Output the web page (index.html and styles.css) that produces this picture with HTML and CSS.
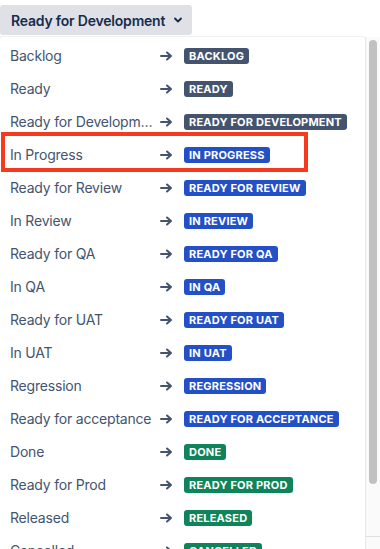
FILE: index.html
```html
<!DOCTYPE html>
<html lang="en">
  <head>
    <meta charset="UTF-8" />
    <meta name="viewport" content="width=device-width, initial-scale=1.0" />
    <title>Status transitions</title>
    <link rel="stylesheet" href="styles.css">
  </head>
  <body>
    <button class="status-button">
      Ready for Development
      <svg class="chevron" width="10" height="10" viewBox="0 0 10 10"><path d="M2 3.5 L5 6.5 L8 3.5" fill="none" stroke="#172b4d" stroke-width="1.8" stroke-linecap="round" stroke-linejoin="round"/></svg>
    </button>

    <div class="dropdown">
      <div class="menu">
        <div class="row"><span class="label">Backlog</span><span class="arrow"></span><span class="lozenge grey">Backlog</span></div>
        <div class="row"><span class="label">Ready</span><span class="arrow"></span><span class="lozenge grey">Ready</span></div>
        <div class="row"><span class="label">Ready for Development</span><span class="arrow"></span><span class="lozenge grey">Ready for Development</span></div>
        <div class="row highlighted"><span class="label">In Progress</span><span class="arrow"></span><span class="lozenge blue">In Progress</span></div>
        <div class="row"><span class="label">Ready for Review</span><span class="arrow"></span><span class="lozenge blue">Ready for Review</span></div>
        <div class="row"><span class="label">In Review</span><span class="arrow"></span><span class="lozenge blue">In Review</span></div>
        <div class="row"><span class="label">Ready for QA</span><span class="arrow"></span><span class="lozenge blue">Ready for QA</span></div>
        <div class="row"><span class="label">In QA</span><span class="arrow"></span><span class="lozenge blue">In QA</span></div>
        <div class="row"><span class="label">Ready for UAT</span><span class="arrow"></span><span class="lozenge blue">Ready for UAT</span></div>
        <div class="row"><span class="label">In UAT</span><span class="arrow"></span><span class="lozenge blue">In UAT</span></div>
        <div class="row"><span class="label">Regression</span><span class="arrow"></span><span class="lozenge blue">Regression</span></div>
        <div class="row"><span class="label">Ready for acceptance</span><span class="arrow"></span><span class="lozenge blue">Ready for acceptance</span></div>
        <div class="row"><span class="label">Done</span><span class="arrow"></span><span class="lozenge green">Done</span></div>
        <div class="row"><span class="label">Ready for Prod</span><span class="arrow"></span><span class="lozenge green">Ready for Prod</span></div>
        <div class="row"><span class="label">Released</span><span class="arrow"></span><span class="lozenge green">Released</span></div>
        <div class="row"><span class="label">Cancelled</span><span class="arrow"></span><span class="lozenge green">Cancelled</span></div>
      </div>
      <div class="scrollbar">
        <div class="thumb"></div>
        <div class="resizer"></div>
      </div>
    </div>
  </body>
</html>
```

FILE: styles.css
```css
body {
  width: 380px;
  height: 549px;
  margin: 0;
  overflow: hidden;
  font-family: Inter, "Liberation Sans", sans-serif;
  background: white;
}
.status-button {
  display: inline-flex;
  align-items: center;
  gap: 8px;
  height: 30px;
  margin-top: 5px;
  padding: 0 9px 0 11px;
  border: none;
  border-radius: 3px;
  background: #dfe1e6;
  color: #172b4d;
  font-family: inherit;
  font-size: 14px;
  font-weight: 600;
  letter-spacing: -0.2px;
}
.dropdown {
  display: flex;
  margin-top: 2px;
  height: 512px;
}
.menu {
  position: relative;
  width: 365px;
  padding-top: 2px;
  border-radius: 3px 3px 0 0;
  box-shadow: 0 0 0 1px #eef0f2, 0 1px 3px rgba(9, 30, 66, 0.08);
  overflow: hidden;
}
.row {
  position: relative;
  display: flex;
  align-items: center;
  height: 33px;
  padding-left: 10px;
  font-size: 14px;
  color: #44546f;
}
.label {
  width: 146px;
  letter-spacing: -0.2px;
  white-space: nowrap;
  overflow: hidden;
  text-overflow: ellipsis;
}
.arrow {
  width: 13px;
  height: 10px;
  margin: 0 11px 0 4px;
  background: no-repeat center / contain url("data:image/svg+xml,%3Csvg xmlns='http://www.w3.org/2000/svg' viewBox='0 0 13 10'%3E%3Cpath d='M1 5h10M7 1.5 11 5 7 8.5' fill='none' stroke='%2344546f' stroke-width='2' stroke-linecap='round' stroke-linejoin='round'/%3E%3C/svg%3E");
}
.lozenge {
  display: inline-block;
  height: 16px;
  line-height: 16px;
  padding: 0 5px;
  border-radius: 3px;
  font-size: 11px;
  font-weight: 700;
  text-transform: uppercase;
  letter-spacing: 0.2px;
  color: white;
}
.grey {
  background: #44546f;
}
.blue {
  background: #2350c6;
}
.green {
  background: #0f8359;
}
.highlighted::after {
  content: "";
  position: absolute;
  left: 1px;
  top: -6px;
  width: 299px;
  height: 32px;
  border: 4px solid #f53a1f;
}
.scrollbar {
  position: relative;
  width: 14px;
  border-left: 1px solid #e8e8e8;
  background: #fafafa;
}
.thumb {
  width: 8px;
  height: 444px;
  margin: 3px 0 0 3px;
  border-radius: 4px;
  background: #c1c1c1;
}
.resizer {
  position: absolute;
  left: 0;
  right: 0;
  bottom: 0;
  height: 12px;
  border-top: 1px solid #e0e0e0;
}
```
